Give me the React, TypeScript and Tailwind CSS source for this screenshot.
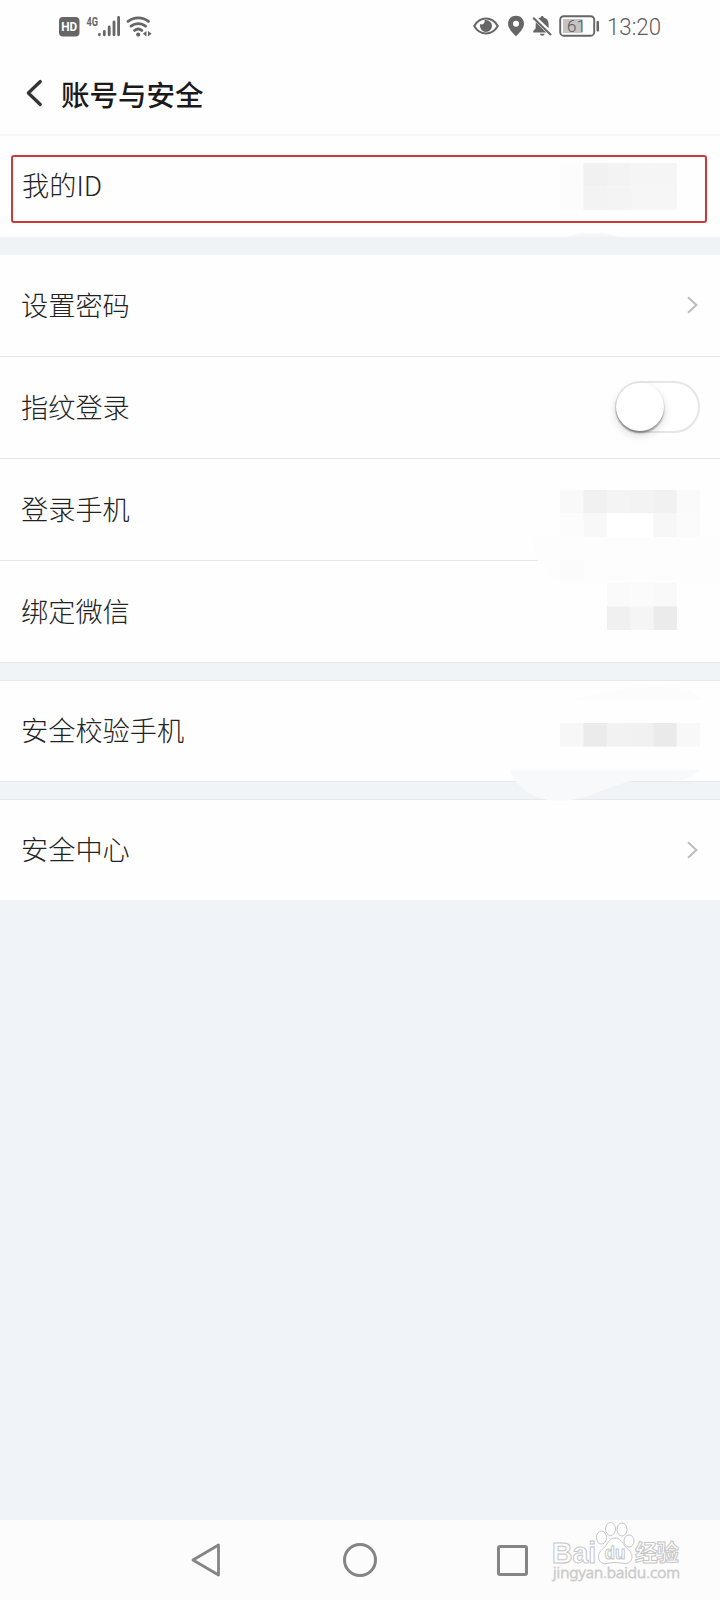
import type { ReactNode } from "react";

interface RowProps {
  label: string;
  border?: boolean;
  short?: boolean;
  children?: ReactNode;
}

interface MosaicProps {
  cells: string[][];
  className?: string;
}

const CELL = 70 / 3;

const ID_CELLS = [
  ["#fcfcfc", "#f1f1f1", "#f3f3f3", "#f5f5f5", "#f5f5f5"],
  ["#fcfcfc", "#f3f3f3", "#f4f4f4", "#f6f6f6", "#f6f6f6"],
];
const PHONE_CELLS = [
  ["#f9f9f9", "#f1f1f1", "#f4f4f4", "#f3f3f3", "#f1f1f1", "#fafafa"],
  ["#fcfcfc", "#f8f8f8", "#ffffff", "#ffffff", "#f7f7f7", "#fbfbfb"],
];
const WECHAT_CELLS = [
  ["#fafafa", "#fbfbfb", "#f9f9f9"],
  ["#f0f0f0", "#f5f5f5", "#ebebeb"],
];
const CHECK_CELLS = [
  ["#f7f7f7", "#ebebeb", "#f2f2f2", "#f1f1f1", "#eaeaea", "#f8f8f8"],
];

const Mosaic = ({ cells, className = "" }: MosaicProps) => (
  <svg
    className={`shrink-0 ${className}`}
    width={cells[0].length * CELL}
    height={cells.length * CELL}
  >
    {cells.map((row, y) =>
      row.map((fill, x) => (
        <rect
          key={`${x}-${y}`}
          x={x * CELL}
          y={y * CELL}
          width={CELL + 0.3}
          height={CELL + 0.3}
          fill={fill}
        />
      ))
    )}
  </svg>
);

const Chevron = () => (
  <svg className="mr-[2px] mb-px" width="11" height="18" viewBox="0 0 11 18" fill="none">
    <path d="M1 1.2 9.4 9 1 16.8" stroke="#bdbdbd" strokeWidth="2" />
  </svg>
);

const Toggle = () => (
  <div className="mb-px flex h-[52px] w-[85px] items-center rounded-full border-[2.5px] border-[#e6e6e6] bg-white">
    <div className="-ml-px h-12 w-12 rounded-full bg-white shadow-[0_2px_2px_rgba(0,0,0,0.4),0_4px_10px_rgba(0,0,0,0.15)]" />
  </div>
);

const Row = ({ label, border, short, children }: RowProps) => (
  <div
    className={`flex items-center justify-between pr-5 pl-[21px] ${
      border ? "h-[102px] border-b border-[#e6e6e6]" : short ? "h-[100px]" : "h-[101px]"
    }`}
  >
    <span className="mb-[2px] text-[27.2px] leading-none">{label}</span>
    {children}
  </div>
);

const Gap = () => (
  <div className="h-[19px] border-y border-[#e6e8ea] bg-[#f1f4f6]" />
);

const StatusBar = () => (
  <div className="flex h-[53px] items-center justify-between pr-[56px] pb-[2px] pl-[59px] text-[#666]">
    <svg width="94" height="32" viewBox="0 0 94 32" fill="none">
      <rect x="0" y="7" width="20.5" height="19.5" rx="4" fill="#666" />
      <text
        x="10.2"
        y="21.2"
        textAnchor="middle"
        fontSize="12.5"
        fontWeight="700"
        fill="#fff"
        textLength="16"
        lengthAdjust="spacingAndGlyphs"
        className="font-['Roboto',sans-serif]"
      >
        HD
      </text>
      <text
        x="27.5"
        y="15.5"
        fontSize="13"
        fontWeight="700"
        fill="#666"
        textLength="11.5"
        lengthAdjust="spacingAndGlyphs"
        className="font-['Roboto',sans-serif]"
      >
        4G
      </text>
      <g stroke="#666" strokeWidth="2.8" strokeLinecap="round">
        <path d="M40.4 24.5v.3M45.3 21.5v3.3M50.2 17v7.8M55 12v12.8M59.6 7.5v17.3" />
      </g>
      <g stroke="#666" strokeWidth="2.8" strokeLinecap="round">
        <path d="M69 11.4a16.5 16.5 0 0 1 20.5 0M72 16.2a11.5 11.5 0 0 1 14.6 0M75.6 20.4a6 6 0 0 1 7.2 0" />
      </g>
      <circle cx="79.2" cy="24.6" r="2.1" fill="#666" />
      <path d="m83.8 23.7 3.7-2.7v5.4zM92.6 23.7 89 21v5.4z" fill="#666" />
    </svg>
    <div className="flex items-center">
      <svg width="26" height="20" viewBox="0 0 26 20" fill="none">
        <path
          d="M1.2 10C4 5.2 8.2 2.6 13 2.6S22 5.2 24.8 10C22 14.8 17.8 17.4 13 17.4S4 14.8 1.2 10Z"
          stroke="#666"
          strokeWidth="2"
        />
        <path d="M13 4a6 6 0 1 1-6 6c0-.8.1-1.3.3-1.9a3.1 3.1 0 0 0 4.2-3.9C12 4.1 12.5 4 13 4Z" fill="#666" />
      </svg>
      <svg className="ml-[8px]" width="18" height="22" viewBox="0 0 18 22">
        <path
          fillRule="evenodd"
          d="M9 .8c4.6 0 8 3.5 8 8 0 4.3-4 8.7-8 12.4-4-3.7-8-8.1-8-12.4 0-4.5 3.4-8 8-8Zm0 5a3 3 0 1 0 0 6 3 3 0 0 0 0-6Z"
          fill="#666"
        />
      </svg>
      <svg className="ml-[7px]" width="20" height="22" viewBox="0 0 20 22" fill="none">
        <path
          d="M6.5 3.6C7.4 2.9 8 2.8 8.6 2.6 8.7.4 11.6.4 11.7 2.6c3.4.8 4.9 3.3 4.9 6.4v4.2zM3.8 7.3 14.2 17.4H1.2v-1.3l2.4-2.6zM7.8 18.8h4.9a2.5 2.5 0 0 1-4.9 0Z"
          fill="#666"
        />
        <path d="M1.2 2.8 19 20" stroke="#666" strokeWidth="2" />
      </svg>
      <svg className="ml-[7px]" width="41" height="22" viewBox="0 0 41 22" fill="none">
        <rect x="1.2" y="1.2" width="34" height="19.5" rx="3.5" stroke="#666" strokeWidth="1.9" />
        <rect x="4" y="4" width="19.5" height="14" fill="#c4c4c4" />
        <text
          x="17.5"
          y="17"
          textAnchor="middle"
          fontSize="17"
          fill="#555"
          className="font-['Roboto',sans-serif]"
        >
          61
        </text>
        <rect x="37.5" y="6" width="2.5" height="10.5" rx="1" fill="#666" />
      </svg>
      <svg className="ml-[7px]" width="57" height="32" viewBox="0 0 57 32">
        <text
          x="0"
          y="24.5"
          fontSize="23.5"
          fontWeight="300"
          fill="#5c5c5c"
          textLength="54"
          lengthAdjust="spacingAndGlyphs"
          className="font-['Roboto',sans-serif]"
        >
          13:20
        </text>
      </svg>
    </div>
  </div>
);

const Header = () => (
  <div className="flex h-[83px] items-center border-b-2 border-[#f7f7f7] pl-[26px]">
    <svg className="mb-px" width="17" height="28" viewBox="0 0 17 28" fill="none">
      <path
        d="M14.3 2.5 2.3 14l12 11.5"
        stroke="#333"
        strokeWidth="3.2"
        strokeLinecap="round"
        strokeLinejoin="round"
      />
    </svg>
    <h1 className="mt-[2px] ml-[18px] text-[28.5px] leading-none font-medium text-[#1a1a1a]">
      账号与安全
    </h1>
  </div>
);

const Watermark = () => (
  <svg
    className="absolute top-0 right-[32px]"
    width="140"
    height="70"
    viewBox="0 0 140 70"
    fill="#fff"
    stroke="#c6c6c6"
    strokeWidth="1"
  >
    <text
      x="4"
      y="42.5"
      fontSize="29"
      fontWeight="700"
      textLength="44"
      lengthAdjust="spacingAndGlyphs"
      className="font-['Liberation_Sans',sans-serif]"
    >
      Bai
    </text>
    <ellipse cx="53.5" cy="17.5" rx="5" ry="6.5" />
    <ellipse cx="62.5" cy="9" rx="5" ry="6.5" />
    <ellipse cx="74" cy="9.5" rx="5" ry="6.5" />
    <ellipse cx="81" cy="21" rx="5" ry="6" />
    <path d="M67 18c5 0 7 4 9.500 7.500 3 4 7.500 6 7.500 11 0 5-4 7.500-8 7-3-.5-6-1-9-1s-6 .5-9 1c-4 .5-7.500-2-7.500-7 0-5 4.500-7 7.500-11C60.500 22 62 18 67 18Z" />
    <text
      x="56.5"
      y="39"
      fontSize="19"
      fontWeight="700"
      textLength="21"
      lengthAdjust="spacingAndGlyphs"
      className="font-['Liberation_Sans',sans-serif]"
    >
      du
    </text>
    <text
      x="87"
      y="41"
      fontSize="22.5"
      fontWeight="700"
      textLength="44"
      className="font-['Noto_Sans_CJK_SC',sans-serif]"
    >
      经验
    </text>
    <text
      x="5"
      y="58"
      fontSize="14"
      fill="#fafafa"
      stroke="#cdcdcd"
      strokeWidth="0.8"
      textLength="127"
      lengthAdjust="spacingAndGlyphs"
      className="font-['Noto_Sans',sans-serif]"
    >
      jingyan.baidu.com
    </text>
  </svg>
);

const NavBar = () => (
  <div className="relative flex h-20 items-center bg-[#fcfcfc] pl-[190px]">
    <svg width="32" height="36" viewBox="0 0 32 36" fill="none">
      <path
        d="M28.5 3v30L3 18z"
        stroke="#858585"
        strokeWidth="2.8"
        strokeLinejoin="round"
      />
    </svg>
    <div className="ml-[121px] h-[34px] w-[34px] rounded-full border-[3px] border-[#858585]" />
    <div className="ml-[120px] h-[31px] w-[31px] rounded-[3px] border-[3px] border-[#858585]" />
    <Watermark />
  </div>
);

// Faint brush strokes left over the hidden values
const Smudges = () => (
  <svg className="pointer-events-none absolute top-0 left-0" width="720" height="910">
    <path d="M568 237c6-5 42-5 50 0z" fill="#f4f6f8" />
    <path d="M533 537h187v46H560c-12-8-27-18-27-46Z" fill="#fdfdfd" />
    <rect x="560" y="560" width="23.3" height="22" fill="#fbfbfb" />
    <path d="M574 700c35-11 60-14 85-14 22 0 37 5 43 14z" fill="#fcfcfc" />
    <path
      d="M510 770h190c-8 6-14 10-23 11h-45c-25 5-45 20-72 20-25 0-43-12-50-31Z"
      fill="#f7f9fb"
    />
  </svg>
);

const App = () => (
  <div className="relative flex h-[1600px] w-[720px] flex-col bg-[#f0f4f8] font-['Noto_Sans_CJK_SC',sans-serif] font-light text-[#222]">
    <div className="bg-[#fefefe]">
      <StatusBar />
      <Header />
      <div className="h-[101px] px-[11px] pt-[19px]">
        <div className="mr-[2px] flex h-[68px] items-start justify-between rounded-[3px] border-2 border-[#cb3a38] pr-[28px] pl-[9px]">
          <span className="mt-[14px] text-[27.2px] leading-none">我的ID</span>
          <Mosaic cells={ID_CELLS} className="mt-[6px]" />
        </div>
      </div>
    </div>
    <div className="h-[18px] bg-[#f0f3f6]" />
    <div className="bg-[#fefefe]">
      <Row label="设置密码" border>
        <Chevron />
      </Row>
      <Row label="指纹登录" border>
        <Toggle />
      </Row>
      <Row label="登录手机" border>
        <Mosaic cells={PHONE_CELLS} className="mt-2" />
      </Row>
      <Row label="绑定微信">
        <Mosaic cells={WECHAT_CELLS} className="mr-[23px] mb-[10px]" />
      </Row>
    </div>
    <Gap />
    <div className="bg-[#fefefe]">
      <Row label="安全校验手机" short>
        <Mosaic cells={CHECK_CELLS} className="mt-2" />
      </Row>
    </div>
    <Gap />
    <div className="bg-[#fefefe]">
      <Row label="安全中心" short>
        <Chevron />
      </Row>
    </div>
    <div className="grow" />
    <NavBar />
    <Smudges />
  </div>
);

export default App;
